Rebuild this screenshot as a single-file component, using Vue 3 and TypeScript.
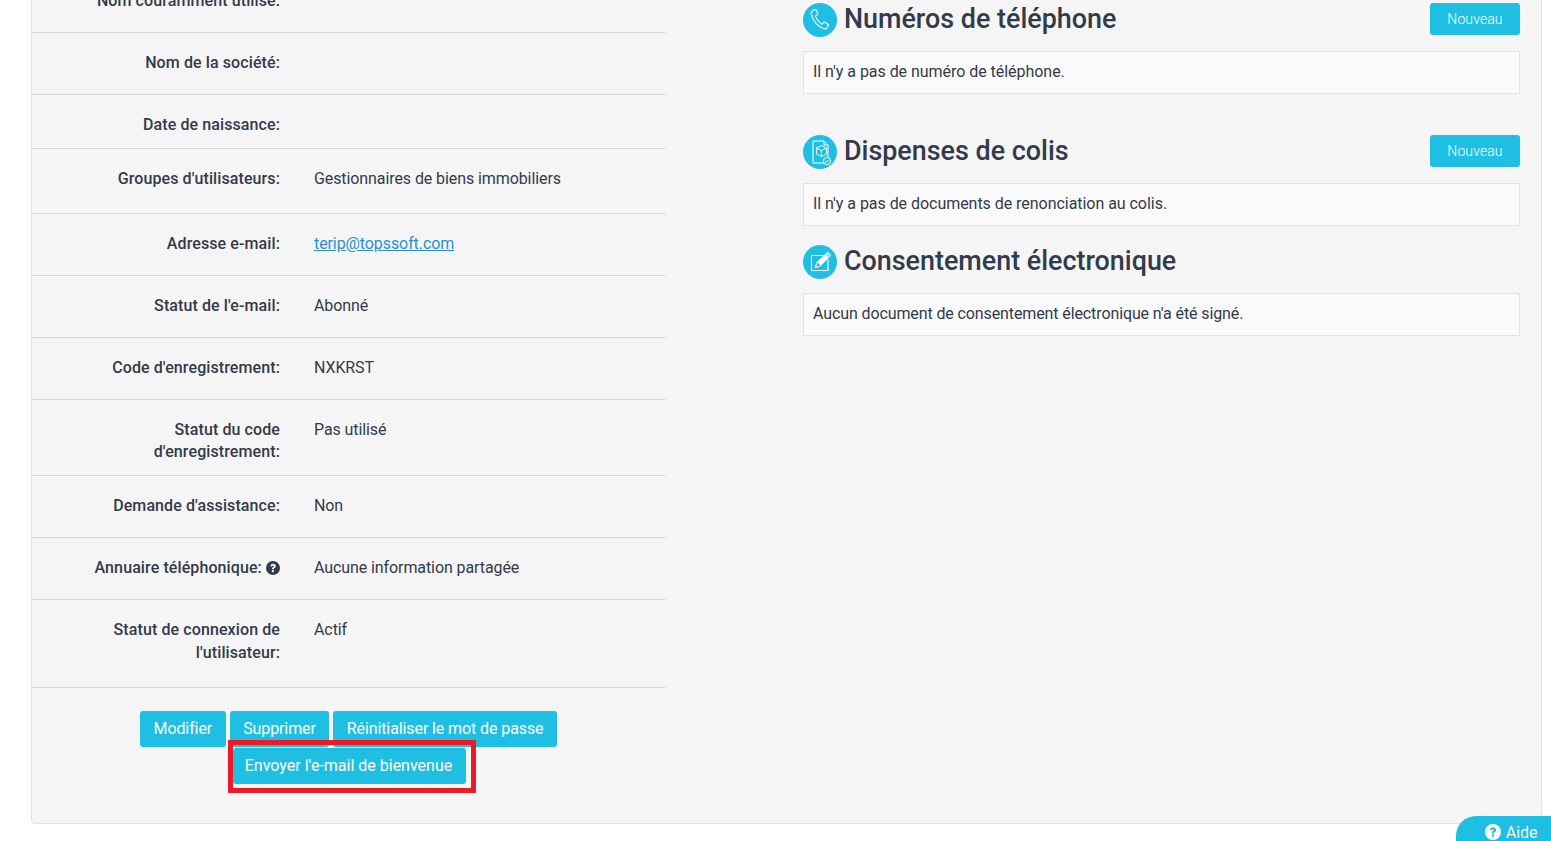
<script setup lang="ts">
interface Row {
  label: string
  value?: string
  link?: boolean
  help?: boolean
  kind: string
}

const rows: Row[] = [
  { label: 'Nom couramment utilisé:', kind: 'std' },
  { label: 'Nom de la société:', kind: 'std' },
  { label: 'Date de naissance:', kind: 'short' },
  { label: "Groupes d'utilisateurs:", value: 'Gestionnaires de biens immobiliers', kind: 'tall' },
  { label: 'Adresse e-mail:', value: 'terip@topssoft.com', link: true, kind: 'std' },
  { label: "Statut de l'e-mail:", value: 'Abonné', kind: 'std' },
  { label: "Code d'enregistrement:", value: 'NXKRST', kind: 'std' },
  { label: "Statut du code d'enregistrement:", value: 'Pas utilisé', kind: 'two' },
  { label: "Demande d'assistance:", value: 'Non', kind: 'std' },
  { label: 'Annuaire téléphonique:', value: 'Aucune information partagée', help: true, kind: 'std' },
  { label: "Statut de connexion de l'utilisateur:", value: 'Actif', kind: 'twotall' }
]
</script>

<template>
  <div class="page">
    <div class="card">
      <section class="left">
        <div v-for="row in rows" :key="row.label" class="row" :class="row.kind">
          <div class="label">
            {{ row.label }}
            <svg v-if="row.help" class="help" viewBox="0 0 14 14" width="14" height="14">
              <circle cx="7" cy="7" r="7" fill="#333a4b" />
              <path d="M4.300 5.300C4.400 3.700 5.500 2.700 7.100 2.700s2.800 1 2.800 2.400c0 1.100-.7 1.600-1.300 2-.5.3-.7.600-.7 1.200H5.900c0-1.100.3-1.600 1-2.100.5-.3.900-.5.900-1s-.3-.7-.8-.7-.8.300-.9 1z" fill="#f5f5f5" />
              <rect x="5.900" y="9.100" width="2" height="2.100" fill="#f5f5f5" />
            </svg>
          </div>
          <div class="value">
            <a v-if="row.link" href="#">{{ row.value }}</a>
            <template v-else>{{ row.value }}</template>
          </div>
        </div>
        <div class="actions">
          <button class="btn" type="button">Modifier</button>
          <button class="btn" type="button">Supprimer</button>
          <button class="btn" type="button">Réinitialiser le mot de passe</button>
          <span class="welcome">
            <button class="btn" type="button">Envoyer l'e-mail de bienvenue</button>
            <span class="highlight"></span>
          </span>
        </div>
      </section>

      <section class="right">
        <div class="block phones">
          <header class="head">
            <span class="disc">
              <svg viewBox="0 0 34 34" width="34" height="34" fill="none" stroke="#fff" stroke-width="1.100" stroke-linejoin="round" stroke-linecap="round">
                <path d="M9.500 7.600 12 6.600c.5-.2 1 0 1.200.5l1.600 3.400c.2.400.1.900-.3 1.100l-1.600 1.100c-.3.2-.4.600-.3.900 1 2.600 3.300 5.600 5.700 7.300.3.2.7.2 1-.1l1.300-1.300c.3-.3.8-.4 1.200-.2l3.200 1.900c.4.300.6.800.3 1.200l-1.300 2.300c-.6 1-1.800 1.500-3 1.100-6.400-2.200-11.300-8.200-12.600-14.600-.2-1.200.1-2.700 1.100-3.100z" />
              </svg>
            </span>
            <h2>Numéros de téléphone</h2>
            <button class="btn small" type="button">Nouveau</button>
          </header>
          <div class="box">Il n'y a pas de numéro de téléphone.</div>
        </div>

        <div class="block waivers">
          <header class="head">
            <span class="disc">
              <svg viewBox="0 0 34 34" width="34" height="34" fill="none" stroke="#fff" stroke-width="1" stroke-linejoin="round">
                <path d="M25 23V10l-4-4H10v22h11" />
                <path d="M21 6v4h4" />
                <path d="M18.500 10.500l5 2.500v6l-5 2.500-5-2.500v-6z" />
                <path d="M13.500 13l5 2.500 5-2.500M18.500 15.500v6" />
                <circle cx="24" cy="26" r="3.600" fill="#1fbfe3" />
                <path d="M22.300 26l1.200 1.200 2.200-2.300" />
              </svg>
            </span>
            <h2>Dispenses de colis</h2>
            <button class="btn small" type="button">Nouveau</button>
          </header>
          <div class="box">Il n'y a pas de documents de renonciation au colis.</div>
        </div>

        <div class="block consent">
          <header class="head">
            <span class="disc">
              <svg viewBox="0 0 34 34" width="34" height="34" fill="none" stroke="#fff" stroke-width="1.100" stroke-linejoin="round">
                <path d="M20.500 10.500H8.500v15h16.500V14.500" />
                <path d="M12.500 22.500l1.200-4.300L24.600 7.300l3 3-10.900 10.900z" />
                <path d="M14.700 17.300l3 3 8.800-8.800-3-3z" fill="#fff" stroke-width=".5" />
                <path d="M22.800 9.100l3 3" stroke="#1fbfe3" stroke-width=".8" />
              </svg>
            </span>
            <h2>Consentement électronique</h2>
          </header>
          <div class="box tight">Aucun document de consentement électronique n'a été signé.</div>
        </div>
      </section>
    </div>

    <button class="aide" type="button">
      <svg viewBox="0 0 16 16" width="16" height="16">
        <circle cx="8" cy="8" r="8" fill="#fff" />
        <path d="M4.900 6.100C5 4.300 6.300 3.200 8.100 3.200s3.100 1.100 3.100 2.700c0 1.200-.8 1.800-1.400 2.200-.6.400-.8.700-.8 1.300H6.800c0-1.200.4-1.800 1.100-2.300.6-.4 1-.6 1-1.100s-.3-.8-.8-.8-.9.300-1 1z" fill="#1fbfe3" />
        <rect x="6.800" y="10.300" width="2.200" height="2.300" fill="#1fbfe3" />
      </svg>
      Aide
    </button>
  </div>
</template>

<style>
html,
body {
  margin: 0;
  height: 100%;
  overflow: hidden;
  background: #fff;
}
</style>

<style scoped>
.page {
  height: 841px;
  overflow: hidden;
  font-family: Roboto, "Liberation Sans", sans-serif;
  font-size: 16px;
  line-height: 22.5px;
  color: #333a4b;
}

.card {
  display: flex;
  box-sizing: border-box;
  width: 1511px;
  height: 854px;
  margin: -30px 0 0 31px;
  border: 1px solid #e3e3e3;
  border-radius: 4px;
  background: #f5f5f5;
}

.left {
  flex: 0 0 634px;
}

.row {
  display: grid;
  grid-template-columns: 248px 1fr;
  column-gap: 34px;
  padding-top: 19px;
  border-bottom: 1px solid #d7d7d7;
}

.row.std {
  padding-bottom: 19.5px;
}

.row.short {
  padding-bottom: 11.5px;
}

.row.tall {
  padding-bottom: 22.5px;
}

.row.two {
  padding-bottom: 12px;
  line-height: 22px;
}

.row.twotall {
  padding-bottom: 23px;
}

.label {
  padding-left: 30px;
  font-weight: 500;
  text-align: right;
  letter-spacing: 0.1px;
}

.help {
  vertical-align: -2px;
}

.value {
  letter-spacing: -0.09px;
}

.value a {
  color: #2a8fd8;
}

.actions {
  padding: 23px 21px 0 20px;
  text-align: center;
  font-size: 0;
  line-height: 0;
}

.btn {
  box-sizing: border-box;
  height: 36px;
  margin: 0 2px;
  padding: 0 13.5px;
  border: 0;
  border-radius: 3px;
  background: #1fbfe3;
  color: #fff;
  font-family: inherit;
  font-size: 16px;
  font-weight: 400;
  line-height: 36px;
  letter-spacing: -0.1px;
}

.btn.small {
  width: 90px;
  height: 32px;
  margin: 0;
  padding: 0;
  font-size: 14px;
  font-weight: 300;
  line-height: 32px;
  letter-spacing: 0.1px;
}

.welcome {
  position: relative;
  display: inline-block;
  margin: 1px 0 0 2px;
}

.welcome .btn {
  padding: 0 13.5px 0 11.5px;
  vertical-align: top;
  letter-spacing: 0;
}

.highlight {
  position: absolute;
  top: -8px;
  left: -3px;
  width: 248px;
  height: 53px;
  box-sizing: border-box;
  border: 5px solid #ed1c24;
  pointer-events: none;
}

.right {
  flex: 0 0 717px;
  margin-left: 137px;
  padding-top: 32px;
}

.phones {
  height: 132px;
}

.waivers {
  height: 110px;
}

.head {
  display: flex;
  align-items: flex-start;
  height: 48px;
}

.disc {
  flex: 0 0 34px;
  width: 34px;
  height: 34px;
  margin-right: 7px;
  border-radius: 50%;
  background: #1fbfe3;
}

.disc svg {
  display: block;
}

h2 {
  flex: 1;
  margin: 0;
  font-size: 26.9px;
  font-weight: 500;
  line-height: 32px;
}

.box {
  box-sizing: border-box;
  height: 43px;
  padding: 9px;
  border: 1px solid #e3e3e3;
  background: #fafafa;
  letter-spacing: -0.04px;
}

.box.tight {
  letter-spacing: -0.11px;
}

.aide {
  position: fixed;
  right: 0;
  bottom: 0;
  display: flex;
  align-items: center;
  gap: 5px;
  box-sizing: border-box;
  width: 95px;
  height: 25px;
  padding: 7px 0 0 29px;
  border: 0;
  border-radius: 20px 0 0 0;
  background: #1fbfe3;
  color: #fff;
  font-family: inherit;
  font-size: 16px;
  font-weight: 400;
}
</style>
